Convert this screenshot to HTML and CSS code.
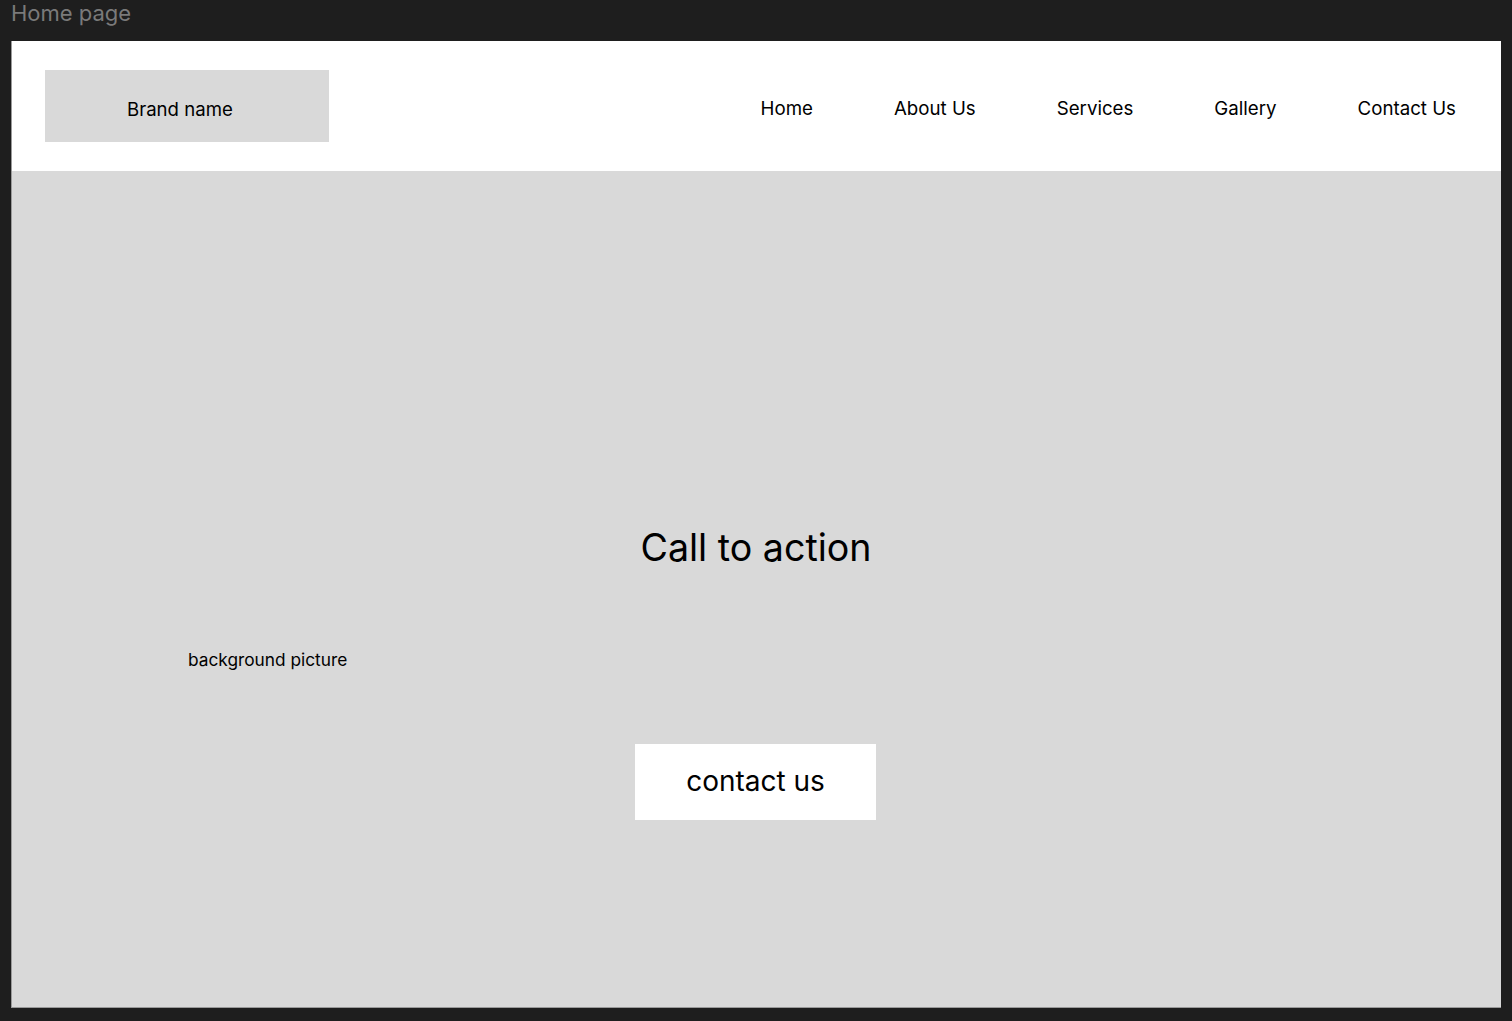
FILE: index.html
```html
<!DOCTYPE html>
<html lang="en">
<head>
<meta charset="utf-8">
<title>Home page</title>
<link rel="stylesheet" href="styles.css">
</head>
<body>
<div class="label">Home page</div>
<div class="frame">
  <header class="header">
    <div class="brand">Brand name</div>
    <nav class="nav">
      <a class="nav-item">Home</a>
      <a class="nav-item">About Us</a>
      <a class="nav-item">Services</a>
      <a class="nav-item">Gallery</a>
      <a class="nav-item">Contact Us</a>
    </nav>
  </header>
  <main class="hero">
    <h1 class="cta">Call to action</h1>
    <p class="bg-note">background picture</p>
    <button class="btn">contact us</button>
  </main>
</div>
</body>
</html>
```

FILE: styles.css
```css
* { box-sizing: border-box; }
html, body { margin: 0; padding: 0; }
body {
  background: #1e1e1e;
  font-family: Inter, "Noto Sans", sans-serif;
  color: #000;
  width: 1512px;
  height: 1021px;
  overflow: hidden;
}
.label {
  height: 41px;
  padding-left: 11px;
  font-size: 22px;
  line-height: 26px;
  color: #7a7a7a;
}
.frame {
  margin-left: 11px;
  width: 1490px;
  height: 967px;
  display: flex;
  flex-direction: column;
  border-left: 1px solid #9a9a9a;
  border-bottom: 1px solid #9a9a9a;
}
.header {
  height: 130px;
  background: #fff;
  display: flex;
  justify-content: space-between;
  align-items: flex-start;
  padding: 29px 45px 0 33px;
}
.brand {
  width: 284px;
  height: 72px;
  background: #d9d9d9;
  font-size: 18.6px;
  padding: 28px 0 0 82px;
  line-height: 22px;
}
.nav {
  display: flex;
  gap: 81px;
  padding-top: 28px;
}
.nav-item {
  font-size: 18.7px;
  line-height: 22px;
  color: #000;
}
.hero {
  flex: 1;
  background: #d9d9d9;
  display: flex;
  flex-direction: column;
  padding-top: 355px;
}
.cta {
  margin: 0 0 0 -1px;
  align-self: center;
  font-size: 37.6px;
  font-weight: 400;
  line-height: 44px;
}
.bg-note {
  margin: 80px 0 0 176px;
  font-size: 17.3px;
  line-height: 19px;
}
.btn {
  align-self: center;
  margin: 75px 0 0 -2px;
  width: 241px;
  height: 76px;
  background: #fff;
  border: none;
  font-family: Inter, "Noto Sans", sans-serif;
  font-size: 28px;
  line-height: 32px;
  padding: 0 0 3px;
  color: #000;
}
```
